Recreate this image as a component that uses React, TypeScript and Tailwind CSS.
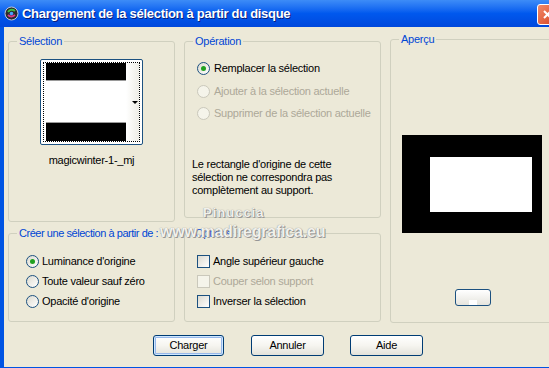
import React from 'react';

const font = "font-['Liberation_Sans',Arial,sans-serif]";

const Radio: React.FC<{ checked?: boolean; disabled?: boolean }> = ({ checked, disabled }) => (
  <span
    className={`w-[13px] h-[13px] rounded-full border flex items-center justify-center shrink-0 ${
      disabled ? 'border-[#cac8bb] bg-[#f5f4ea]' : 'border-[#1c5180] bg-linear-to-br from-[#dcdad0] to-white'
    }`}
  >
    {checked && <span className="w-[5px] h-[5px] rounded-full bg-[#21a121]" />}
  </span>
);

const Check: React.FC<{ disabled?: boolean }> = ({ disabled }) => (
  <span
    className={`w-[13px] h-[13px] border shrink-0 ${
      disabled ? 'border-[#cac8bb] bg-[#f5f4ea]' : 'border-[#1c5180] bg-linear-to-br from-[#dcdad0] to-white'
    }`}
  />
);

const Group: React.FC<{ title: string; className?: string; legendClass?: string; children?: React.ReactNode }> = ({ title, className, legendClass, children }) => (
  <fieldset className={`min-w-0 border border-[#d0d0bf] rounded-[3px] ${className ?? ''}`}>
    <legend className={`ml-[8px] px-[2px] text-[#0046d5] leading-[13px] whitespace-nowrap ${legendClass ?? ''}`}>{title}</legend>
    {children}
  </fieldset>
);

const Button: React.FC<{ label: string; def?: boolean; w?: string }> = ({ label, def, w }) => (
  <button
    className={`${w ?? 'w-[73px]'} h-[21px] rounded-[3px] border border-[#003c74] bg-linear-to-b from-white via-[#f6f5f0] to-[#e3e2da] flex items-center justify-center text-black ${
      def ? 'shadow-[inset_0_0_0_1px_#cee7ff,inset_0_0_0_2px_#98b8ea]' : ''
    }`}
  >
    {label}
  </button>
);

export default function App() {
  return (
    <div className={`relative w-[549px] h-[368px] overflow-hidden bg-[#0054e3] flex flex-col text-[11px] tracking-[-0.25px] whitespace-nowrap ${font}`}>
      {/* barre de titre */}
      <div className="h-[27px] shrink-0 flex items-center bg-linear-to-b from-[#3d8cf7] via-[#0058ee] to-[#0048dc] relative">
        <svg className="ml-[4px] w-[15px] h-[15px]" viewBox="0 0 15 15">
          <circle cx="7.5" cy="7.5" r="6.5" fill="#2b2b2b" stroke="#bfc7d6" strokeWidth="1" />
          <path d="M4 6 Q7 2 11 5" stroke="#3fbf3f" strokeWidth="2" fill="none" />
          <path d="M4 9 Q7 12 11 9" stroke="#d83a8a" strokeWidth="2" fill="none" />
          <circle cx="7.5" cy="7.5" r="1.8" fill="#4aa3ff" />
        </svg>
        <span className="ml-[3px] text-white font-bold text-[13px] [text-shadow:1px_1px_0_#0a1e7a] tracking-[-0.3px]">
          Chargement de la sélection à partir du disque
        </span>
        <div className="absolute left-[537px] top-[4px] w-[21px] h-[21px] rounded-[3px] border border-white bg-linear-to-br from-[#f08a6a] to-[#d8401a] flex items-center justify-center">
          <svg width="11" height="11" viewBox="0 0 11 11">
            <path d="M2 2 L9 9 M9 2 L2 9" stroke="white" strokeWidth="2" />
          </svg>
        </div>
      </div>

      {/* corps */}
      <div className="ml-[4px] mb-[1px] flex-1 bg-[#ece9d8] flex flex-col pl-[4px] pt-[8px] text-black">
        <div className="flex gap-[9px]">
          <div className="w-[167px] shrink-0 flex flex-col gap-[5px]">
            <Group title="Sélection" className="h-[187px] flex flex-col items-center">
              <div className="mt-[11px] w-[103px] h-[86px] border border-[#1c5180] rounded-[2px] bg-white p-[2px]">
                <div className="w-full h-full border border-dotted border-black flex">
                  <div className="w-[80px] ml-[2px] flex flex-col justify-between">
                    <div className="h-[18px] bg-black border-b border-[#9a9a9a]" />
                    <div className="h-[19px] bg-black border-t border-[#9a9a9a]" />
                  </div>
                  <div className="flex-1 bg-linear-to-r from-white to-[#eeede6] flex items-center justify-end pr-[1px]">
                    <span className="w-0 h-0 border-l-[3px] border-r-[3px] border-t-[3px] border-l-transparent border-r-transparent border-t-black" />
                  </div>
                </div>
              </div>
              <div className="mt-[9px] leading-[13px]">magicwinter-1-_mj</div>
            </Group>
            <Group title="Créer une sélection à partir de :" legendClass="tracking-[-0.45px]" className="h-[95px]">
              <div className="mt-[11px] pl-[17px] flex flex-col">
                <div className="h-[20px] flex items-center gap-[3px]"><Radio checked />Luminance d'origine</div>
                <div className="h-[20px] flex items-center gap-[3px]"><Radio />Toute valeur sauf zéro</div>
                <div className="h-[20px] flex items-center gap-[3px]"><Radio />Opacité d'origine</div>
              </div>
            </Group>
          </div>

          <div className="w-[197px] shrink-0 flex flex-col gap-[9px]">
            <Group title="Opération" className="h-[183px]">
              <div className="mt-[9px] pl-[12px] flex flex-col">
                <div className="h-[23px] flex items-center gap-[4px]"><Radio checked />Remplacer la sélection</div>
                <div className="h-[22px] flex items-center gap-[4px] text-[#aca899]"><Radio disabled />Ajouter à la sélection actuelle</div>
                <div className="h-[22px] flex items-center gap-[4px] text-[#aca899]"><Radio disabled />Supprimer de la sélection actuelle</div>
              </div>
              <p className="mt-[34px] pl-[7px] leading-[13px]">
                Le rectangle d'origine de cette<br />sélection ne correspondra pas<br />complètement au support.
              </p>
            </Group>
            <Group title="Options" className="h-[95px]">
              <div className="mt-[11px] pl-[12px] flex flex-col">
                <div className="h-[20px] flex items-center gap-[3px]"><Check />Angle supérieur gauche</div>
                <div className="h-[20px] flex items-center gap-[3px] text-[#aca899]"><Check disabled />Couper selon support</div>
                <div className="h-[20px] flex items-center gap-[3px]"><Check />Inverser la sélection</div>
              </div>
            </Group>
          </div>

          <div className="w-[170px] shrink-0 -mt-[2px]">
            <Group title="Aperçu" className="h-[290px]">
              <div className="mt-[89px] ml-[11px] w-[140px] h-[98px] bg-black pt-[22px] pl-[28px]">
                <div className="w-[102px] h-[55px] bg-white" />
              </div>
              <div className="mt-[56px] ml-[64px] w-[36px] h-[17px] rounded-[3px] border border-[#1c5180] bg-linear-to-b from-white to-[#e6e5de] flex items-end justify-center">
                <span className="w-[8px] h-[5px] bg-white" />
              </div>
            </Group>
          </div>
        </div>

        <div className="mt-[12px] pl-[145px] flex">
          <Button label="Charger" def w="w-[71px]" />
          <div className="ml-[27px]"><Button label="Annuler" /></div>
          <div className="ml-[26px]"><Button label="Aide" /></div>
        </div>
      </div>

      {/* filigrane */}
      <div className="absolute left-[203px] top-[203px] text-[13px] font-bold text-[#f2f1ec] [text-shadow:0_0_1px_#7a7a7a,1px_1px_0_#9a9a9a] tracking-[1px] pointer-events-none">
        Pinuccia
      </div>
      <div className="absolute left-[160px] top-[220px] text-[16px] font-bold text-[#f2f1ec] [text-shadow:0_0_1px_#7a7a7a,1px_1px_0_#9a9a9a] tracking-[-0.2px] pointer-events-none">
        www.madiregrafica.eu
      </div>
    </div>
  );
}
